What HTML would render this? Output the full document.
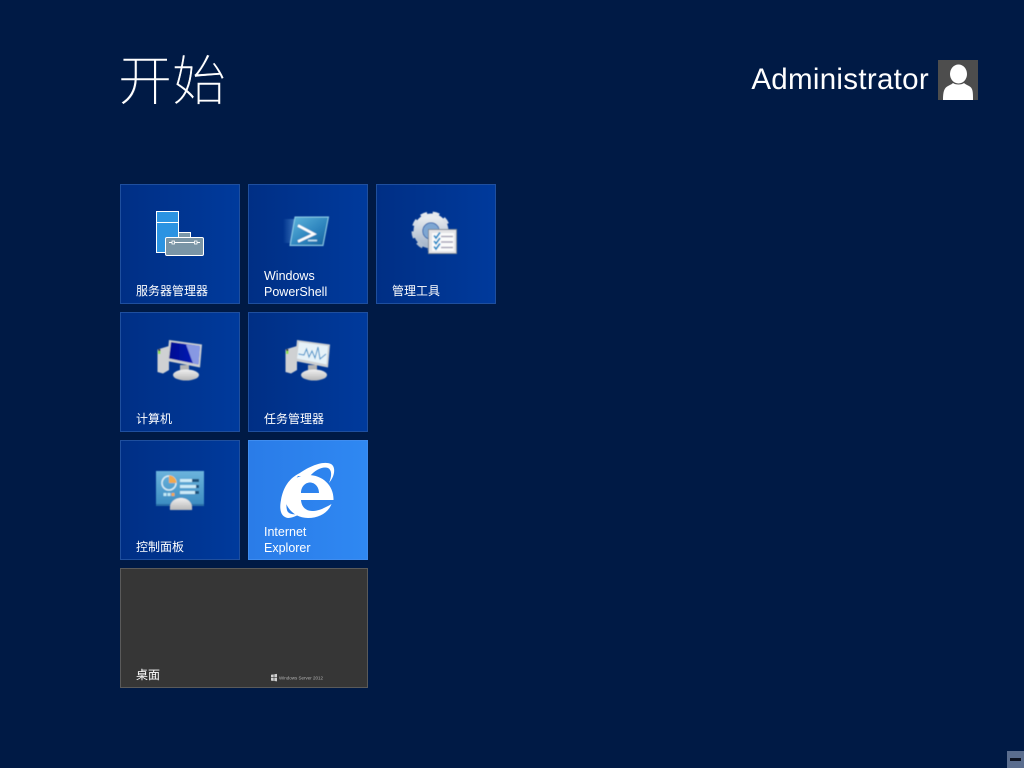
<!DOCTYPE html>
<html lang="zh-CN"><head><meta charset="utf-8"><title>开始</title>
<style>
html,body{margin:0;padding:0;width:1024px;height:768px;overflow:hidden;background:#001a45}
body{position:relative;font-family:"Liberation Sans","Noto Sans CJK SC",sans-serif;color:#fff}
.t{position:absolute;width:118px;height:118px;border:1px solid #1f4f9e;background:linear-gradient(90deg,#002f85,#003a9c)}
.l{position:absolute;font-size:12px;line-height:16px;color:#fff;white-space:nowrap}
.e{font-size:12.5px}
svg{position:absolute;left:0;top:0}
</style></head><body>
<div style="position:absolute;left:118px;top:39px;font-size:54px;line-height:76px;font-weight:300;font-family:'Noto Sans CJK SC',sans-serif;white-space:nowrap;-webkit-text-stroke:.5px #001a45">开始</div>
<div style="position:absolute;right:95px;top:62px;font-size:29.5px;line-height:36px;white-space:nowrap;font-family:'Liberation Sans',sans-serif;letter-spacing:.3px">Administrator</div>
<div class="t" style="left:120px;top:184px"></div>
<div class="t" style="left:248px;top:184px"></div>
<div class="t" style="left:376px;top:184px"></div>
<div class="t" style="left:120px;top:312px"></div>
<div class="t" style="left:248px;top:312px"></div>
<div class="t" style="left:120px;top:440px"></div>
<div class="t" style="left:248px;top:440px;background:linear-gradient(90deg,#2a7ce8,#2f88f2);border-color:#3f8df0"></div>
<div class="t" style="left:120px;top:568px;width:246px;background:#363636;border-color:#5a5a5a"></div>
<svg width="1024" height="768" viewBox="0 0 1024 768">
<defs>
<filter id="b" x="-10%" y="-10%" width="120%" height="120%"><feGaussianBlur stdDeviation=".45"/></filter>
<linearGradient id="ps" x1="0" y1="0" x2="1" y2="1"><stop offset="0" stop-color="#5fb6dc"/><stop offset=".55" stop-color="#2f86bf"/><stop offset="1" stop-color="#15609c"/></linearGradient>
<linearGradient id="st" x1="0" y1="0" x2="1" y2="0"><stop offset="0" stop-color="#5a9ad8" stop-opacity="0"/><stop offset="1" stop-color="#5a9ad8" stop-opacity=".7"/></linearGradient>
<linearGradient id="scr" x1="0" y1="0" x2="1" y2="0"><stop offset="0" stop-color="#000a90"/><stop offset="1" stop-color="#0a20c0"/></linearGradient>
<linearGradient id="gr" x1="0" y1="0" x2="0" y2="1"><stop offset="0" stop-color="#f0f0f0"/><stop offset="1" stop-color="#b8b8b8"/></linearGradient>
<linearGradient id="cp" x1="0" y1="0" x2="0" y2="1"><stop offset="0" stop-color="#6cb4dc"/><stop offset="1" stop-color="#3d8dc2"/></linearGradient>
<linearGradient id="gear" x1="0" y1="0" x2="0" y2="1"><stop offset="0" stop-color="#e8ebee"/><stop offset="1" stop-color="#a8b8cc"/></linearGradient>
<g id="pc">
<path d="M157.500 349.500L169 346V370L163 373.500L157.500 372Z" fill="#cfd1d3"/>
<rect x="158" y="351" width="2.500" height="3" fill="#8ee04a"/>
<rect x="158" y="349" width="2.500" height="2" fill="#444"/>
<path d="M169 340L202 344.500L200 367.500L167 361Z" fill="#cdd0d2"/>
<rect x="180" y="365" width="9" height="7" fill="#b4b4b4"/>
<ellipse cx="186" cy="375" rx="13" ry="5.500" fill="url(#gr)"/>
</g>
</defs>
<!-- server manager -->
<rect x="156.500" y="211.500" width="22" height="41" fill="#2b93e2" stroke="#fff"/>
<path d="M156.500 222.500H178.500" stroke="#fff"/>
<rect x="178.500" y="232.500" width="12" height="8" fill="#7b98aa" stroke="#fff"/>
<rect x="165.500" y="237.500" width="38" height="18" rx="1.500" fill="#7a95a6" stroke="#fff"/>
<path d="M169 242.500H200" stroke="#fff"/><rect x="172" y="241" width="2.500" height="3" fill="#7a95a6" stroke="#fff" stroke-width=".8"/><rect x="194.500" y="241" width="2.500" height="3" fill="#7a95a6" stroke="#fff" stroke-width=".8"/>
<!-- powershell -->
<g filter="url(#b)">
<path d="M283 219H297L293 243H283Z" fill="url(#st)"/>
<path d="M295 217H328.500L323 245.500H290Z" fill="url(#ps)" stroke="#8fd0e8"/>
<path d="M298 225.500L314 234L298 241.500" fill="none" stroke="#fff" stroke-width="2.500"/><path d="M308 240.500H317" stroke="#cfe8f5" stroke-width="1.500"/>
</g>
<!-- admin tools -->
<g filter="url(#b)">
<circle cx="431" cy="231" r="13" fill="none" stroke="url(#gear)" stroke-width="9"/>
<circle cx="431" cy="231" r="17.500" fill="none" stroke="url(#gear)" stroke-width="4" stroke-dasharray="6.500 5.500"/>
<circle cx="431" cy="231" r="8" fill="#7ea6d2"/>
<rect x="428.500" y="229.500" width="28" height="24" fill="#e4e4e6" stroke="#7d8894"/>
<rect x="432" y="233" width="22" height="18" fill="#fbfbfb"/>
<path d="M434 235.500L436 238L440 232.500M434 241L436 243.500L440 238M434 246.500L436 249L440 243.500" fill="none" stroke="#1d8cc8" stroke-width="1.800"/>
<path d="M441 236.500H453M441 242H453M441 247.500H453" stroke="#a8a4b8" stroke-width="1.500"/>
</g>
<!-- computer -->
<g filter="url(#b)">
<use href="#pc"/>
<path d="M171 342L200 346L198.500 364.500L169 358.500Z" fill="url(#scr)"/>
<path d="M186 344.200L200 346L198.500 364.500L193 363.400Z" fill="#a8b8ee" opacity=".8"/>
</g>
<!-- task manager -->
<g filter="url(#b)">
<use href="#pc" x="128"/>
<path d="M299 342L328 346L326.500 364.500L297 358.500Z" fill="#e6f2f8"/>
<path d="M298.500 354L304 355L306.500 349L309 357L312 351L315 358L318 347L320 359L326 354" fill="none" stroke="#3f90c8" stroke-width="1"/>
</g>
<!-- control panel -->
<g filter="url(#b)">
<rect x="156" y="471" width="48" height="33" fill="url(#cp)"/>
<path d="M156 504H204V506H156Z" fill="#2a6ea8"/>
<circle cx="169" cy="483" r="7" fill="none" stroke="#d8edf7" stroke-width="1.500"/>
<path d="M169 475.500A7.500 7.500 0 0 1 176.500 483H169Z" fill="#f2a94e"/>
<rect x="180" y="479" width="19" height="3" fill="#cceaf7"/><rect x="192" y="479" width="7" height="3" fill="#1c4f7a"/>
<rect x="180" y="485" width="19" height="3" fill="#cceaf7"/><rect x="196" y="485" width="3" height="3" fill="#1c4f7a"/>
<rect x="180" y="491" width="19" height="3" fill="#cceaf7"/><rect x="195" y="491" width="4" height="3" fill="#1c4f7a"/>
<rect x="163.500" y="493" width="3" height="3" fill="#bfe8f5"/><rect x="167.500" y="493" width="3" height="3" fill="#bfe8f5"/><rect x="171.500" y="493" width="3" height="3" fill="#f2a94e"/>
<path d="M170 510C169 503 174 498 181 498C188 498 193 503 192 510Z" fill="url(#gr)"/>
</g>
<!-- IE -->
<g fill="#fff">
<path fill-rule="evenodd" d="M333.500 500H301C301.500 507 306 511 312 511C318 511 323 509 331.500 504C328 513 319 518 308 518C295 518 285 508 285 497C285 485 295 475 308 475C323 475 334 486 333.500 500ZM301 493H319C319 487 315 482.500 310 482.500C305 482.500 301 487 301 493Z"/>
<path d="M296 476C306 468 322 460 331 464C336 467 335 476 329 483C332 476 332 470 328 468C323 466 315 470 310 476Z"/>
<path d="M300 473C289 478 283 488 281 500C279 510 281 517 288 518C292 518 296 516 300 514C293 515 288 514 287 510C285 503 288 490 300 473Z"/>
</g>
<!-- desktop logo -->
<path d="M271 674.800L273.700 674.400V677.400H271ZM274.300 674.300L277 673.900V677.400H274.300ZM271 678H273.700V681L271 680.600ZM274.300 678H277V681.400L274.300 681Z" fill="#d0d0d0"/>
<text x="279" y="679.500" font-size="4.500" fill="#b0b0b0" font-family="Liberation Sans,sans-serif">Windows Server 2012</text>
<!-- user -->
<rect x="938" y="60" width="40" height="40" fill="#4d4d4d"/>
<ellipse cx="958.500" cy="74" rx="8.500" ry="9.500" fill="#fff"/>
<path d="M943 100C943 92 944 88 948 86C951 84.500 952 84 953 83C955 85 962 85 964 83C965 84 967 85 969 86C973 88 973 92 973 100Z" fill="#fff"/>
<!-- minus -->
<rect x="1007" y="751" width="17" height="17" fill="#5a6d8e"/>
<rect x="1010" y="758" width="11" height="3" fill="#0c1220"/>
</svg>
<div class="l" style="left:136px;top:283px">服务器管理器</div>
<div class="l e" style="left:264px;top:268px">Windows<br>PowerShell</div>
<div class="l" style="left:392px;top:283px">管理工具</div>
<div class="l" style="left:136px;top:411px">计算机</div>
<div class="l" style="left:264px;top:411px">任务管理器</div>
<div class="l" style="left:136px;top:539px">控制面板</div>
<div class="l e" style="left:264px;top:524px">Internet<br>Explorer</div>
<div class="l" style="left:136px;top:667px">桌面</div>
</body></html>
